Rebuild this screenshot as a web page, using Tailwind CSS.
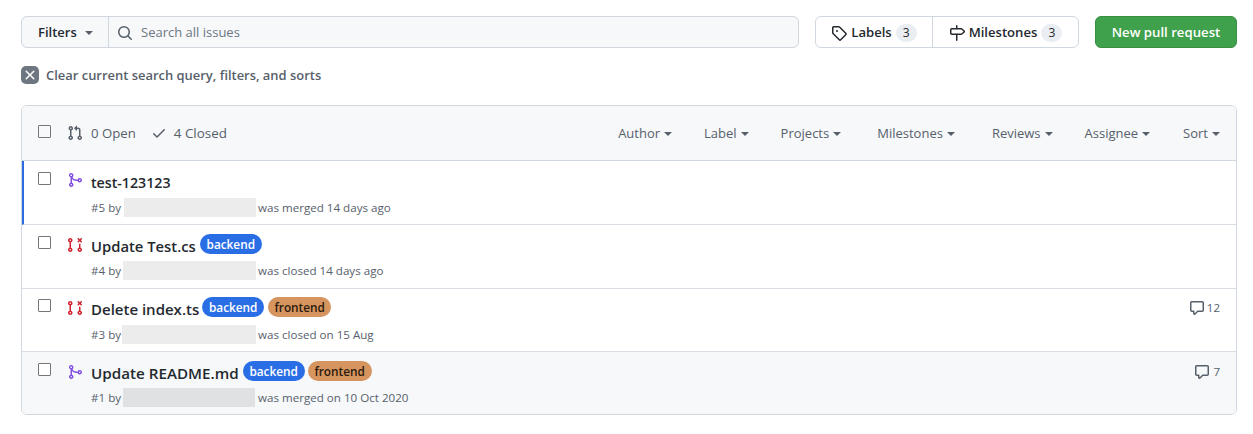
<!DOCTYPE html>
<html lang="en">

<head>
    <meta charset="UTF-8">
    <title>Pull requests</title>
    <script src="https://cdn.jsdelivr.net/npm/@tailwindcss/browser@4"></script>
</head>

<body class="bg-white font-['Open_Sans',sans-serif] text-[#24292f]">
    <div class="px-[21px] pt-4 w-[1237px] box-content pr-[16px]">

        <!-- Top bar -->
        <div class="flex h-8 w-[1216px]">
            <div class="flex w-[778px] rounded-md border border-[#d0d7de] bg-[#f6f8fa]">
                <div class="flex items-center w-[87px] pl-4 pt-px border-r border-[#d0d7de] text-[13px] font-semibold">
                    Filters
                    <span class="ml-2 border-x-4 border-t-4 border-x-transparent border-t-[#57606a]"></span>
                </div>
                <div class="flex items-center pl-2 pt-px text-[13px] text-[#6e7781]">
                    <svg class="w-4 h-4 mr-2 fill-[#57606a]" viewBox="0 0 16 16"><path d="M10.68 11.74a6 6 0 0 1-7.922-8.982 6 6 0 0 1 8.982 7.922l3.04 3.04a.749.749 0 0 1-.326 1.275.749.749 0 0 1-.734-.215ZM11.5 7a4.499 4.499 0 1 0-8.997 0A4.499 4.499 0 0 0 11.5 7Z"/></svg>
                    Search all issues
                </div>
            </div>

            <div class="flex w-[264px] ml-4 rounded-md border border-[#d0d7de] text-[13.1px] font-semibold">
                <div class="flex items-center justify-center w-[117px] pt-px border-r border-[#d0d7de]">
                    <svg class="w-4 h-4 mr-1 fill-[#24292f]" viewBox="0 0 16 16"><path d="M1 7.775V2.75C1 1.784 1.784 1 2.75 1h5.025c.464 0 .91.184 1.238.513l6.25 6.25a1.75 1.75 0 0 1 0 2.474l-5.026 5.026a1.75 1.75 0 0 1-2.474 0l-6.25-6.25A1.752 1.752 0 0 1 1 7.775Zm1.5 0c0 .066.026.13.073.177l6.25 6.25a.25.25 0 0 0 .354 0l5.025-5.025a.25.25 0 0 0 0-.354l-6.25-6.25a.25.25 0 0 0-.177-.073H2.75a.25.25 0 0 0-.25.25ZM6 5a1 1 0 1 1 0 2 1 1 0 0 1 0-2Z"/></svg>
                    Labels
                    <span class="ml-1 w-[21px] h-[18px] rounded-full bg-[#eaeef2] text-xs font-normal text-center leading-[18px]">3</span>
                </div>
                <div class="flex items-center justify-center flex-1 pt-px">
                    <svg class="w-4 h-4 mr-1 fill-[#24292f]" viewBox="0 0 16 16"><path d="M7.75 0a.75.75 0 0 1 .75.75V3h3.634c.414 0 .814.147 1.13.414l2.07 1.75a1.75 1.75 0 0 1 0 2.672l-2.07 1.75a1.75 1.75 0 0 1-1.13.414H8.5v5.25a.75.75 0 0 1-1.5 0V10H2.75A1.75 1.75 0 0 1 1 8.25v-3.5C1 3.784 1.784 3 2.75 3H7V.75A.75.75 0 0 1 7.75 0Zm4.384 8.5a.25.25 0 0 0 .161-.06l2.07-1.75a.248.248 0 0 0 0-.38l-2.07-1.75a.25.25 0 0 0-.161-.06H2.75a.25.25 0 0 0-.25.25v3.5c0 .138.112.25.25.25h9.384Z"/></svg>
                    Milestones
                    <span class="ml-1 w-[21px] h-[18px] rounded-full bg-[#eaeef2] text-xs font-normal text-center leading-[18px]">3</span>
                </div>
            </div>

            <div class="flex items-center justify-center w-[142px] pt-px ml-4 rounded-md bg-[#3fa14b] border border-[#388f43] text-white text-[13.2px] font-semibold">
                New pull request
            </div>
        </div>

        <!-- Clear query -->
        <div class="flex items-center h-[18px] mt-[18px] text-[12.95px] font-semibold text-[#57606a]">
            <span class="flex items-center justify-center w-[18px] h-[18px] mr-[7px] rounded-[5px] bg-[#6e7781]">
                <svg class="w-4 h-4 fill-white" viewBox="0 0 16 16"><path d="M3.72 3.72a.75.75 0 0 1 1.06 0L8 6.94l3.22-3.22a.749.749 0 0 1 1.275.326.749.749 0 0 1-.215.734L9.06 8l3.22 3.22a.749.749 0 0 1-.326 1.275.749.749 0 0 1-.734-.215L8 9.06l-3.22 3.22a.751.751 0 0 1-1.042-.018.751.751 0 0 1-.018-1.042L6.94 8 3.72 4.78a.75.75 0 0 1 0-1.06Z"/></svg>
            </span>
            <span class="pt-px">Clear current search query, filters, and sorts</span>
        </div>

        <!-- Issue list -->
        <div class="w-[1216px] mt-[21px] rounded-md border border-[#d0d7de] overflow-hidden">
            <div class="flex items-center h-[55px] bg-[#f6f8fa] border-b border-[#d0d7de] text-[13px] text-[#57606a]">
                <span class="w-[13px] h-[13px] ml-4 border border-[#767676] rounded-[1px] -mt-1"></span>
                <svg class="w-4 h-4 ml-4 fill-[#57606a]" viewBox="0 0 16 16"><path d="M1.5 3.25a2.25 2.25 0 1 1 3 2.122v5.256a2.251 2.251 0 1 1-1.5 0V5.372A2.25 2.25 0 0 1 1.5 3.25Zm5.677-.177L9.573.677A.25.25 0 0 1 10 .854V2.5h1A2.5 2.5 0 0 1 13.5 5v5.628a2.251 2.251 0 1 1-1.5 0V5a1 1 0 0 0-1-1h-1v1.646a.25.25 0 0 1-.427.177L7.177 3.427a.25.25 0 0 1 0-.354ZM3.75 2.5a.75.75 0 1 0 0 1.5.75.75 0 0 0 0-1.5Zm0 9.5a.75.75 0 1 0 0 1.5.75.75 0 0 0 0-1.5Zm8.25.75a.75.75 0 1 0 1.5 0 .75.75 0 0 0-1.5 0Z"/></svg>
                <span class="ml-2 pt-px text-[13.2px]">0 Open</span>
                <svg class="w-4 h-4 ml-[15px] fill-[#57606a]" viewBox="0 0 16 16"><path d="M13.78 4.22a.75.75 0 0 1 0 1.06l-7.25 7.25a.75.75 0 0 1-1.06 0L2.22 9.28a.751.751 0 0 1 .018-1.042.751.751 0 0 1 1.042-.018L6 10.94l6.72-6.72a.75.75 0 0 1 1.06 0Z"/></svg>
                <span class="ml-[7px] text-[13.4px]">4 Closed</span>
                <div class="flex ml-auto mr-4 pt-px">
                    <span class="flex items-center">Author<span class="ml-1 border-x-4 border-t-4 border-x-transparent border-t-[#57606a]"></span></span>
                    <span class="flex items-center ml-8">Label<span class="ml-1 border-x-4 border-t-4 border-x-transparent border-t-[#57606a]"></span></span>
                    <span class="flex items-center ml-8">Projects<span class="ml-1 border-x-4 border-t-4 border-x-transparent border-t-[#57606a]"></span></span>
                    <span class="flex items-center ml-9">Milestones<span class="ml-1 border-x-4 border-t-4 border-x-transparent border-t-[#57606a]"></span></span>
                    <span class="flex items-center ml-[37px]">Reviews<span class="ml-1 border-x-4 border-t-4 border-x-transparent border-t-[#57606a]"></span></span>
                    <span class="flex items-center ml-8">Assignee<span class="ml-1 border-x-4 border-t-4 border-x-transparent border-t-[#57606a]"></span></span>
                    <span class="flex items-center ml-[33px]">Sort<span class="ml-1 border-x-4 border-t-4 border-x-transparent border-t-[#57606a]"></span></span>
                </div>
            </div>

            <!-- #5 -->
            <div class="flex h-16 border-b border-[#d8dee4] border-l-2 border-l-[#2d6cdf]">
                <span class="w-[13px] h-[13px] ml-[14px] mt-[11px] border border-[#767676] rounded-[1px]"></span>
                <svg class="w-4 h-4 ml-4 mt-[11px] fill-[#8250df]" viewBox="0 0 16 16"><path d="M5.45 5.154A4.25 4.25 0 0 0 9.25 7.5h1.378a2.251 2.251 0 1 1 0 1.5H9.25A5.734 5.734 0 0 1 5 7.123v3.505a2.25 2.25 0 1 1-1.5 0V5.372a2.25 2.25 0 1 1 1.95-.218ZM4.25 13.5a.75.75 0 1 0 0-1.5.75.75 0 0 0 0 1.5Zm8.5-4.5a.75.75 0 1 0 0-1.5.75.75 0 0 0 0 1.5ZM5 3.25a.75.75 0 1 0 0 .005V3.25Z"/></svg>
                <div class="ml-2 pt-[10px]">
                    <div class="flex items-center h-6 text-[14.2px] font-semibold">test-123123</div>
                    <div class="flex items-center h-[19px] mt-[3px] text-[11.6px] text-[#57606a]"><span class="w-[33px]">#5 by</span><span class="w-[132px] h-[19px] mr-[2px] bg-[#ececec]"></span>was merged 14 days ago</div>
                </div>
            </div>

            <!-- #4 -->
            <div class="flex h-16 border-b border-[#d8dee4]">
                <span class="w-[13px] h-[13px] ml-4 mt-[11px] border border-[#767676] rounded-[1px]"></span>
                <svg class="w-4 h-4 ml-4 mt-3 fill-[#cf222e]" viewBox="0 0 16 16"><path d="M3.25 1A2.25 2.25 0 0 1 4 5.372v5.256a2.251 2.251 0 1 1-1.5 0V5.372A2.251 2.251 0 0 1 3.25 1Zm9.5 5.5a.75.75 0 0 1 .75.75v3.378a2.251 2.251 0 1 1-1.5 0V7.25a.75.75 0 0 1 .75-.75Zm-2.03-5.273a.75.75 0 0 1 1.06 0l.97.97.97-.97a.748.748 0 0 1 1.265.332.75.75 0 0 1-.205.729l-.97.97.97.97a.751.751 0 0 1-.018 1.042.751.751 0 0 1-1.042.018l-.97-.97-.97.97a.749.749 0 0 1-1.275-.326.749.749 0 0 1 .215-.734l.97-.97-.97-.97a.75.75 0 0 1 0-1.06ZM2.5 3.25a.75.75 0 1 0 1.5 0 .75.75 0 0 0-1.5 0ZM3.25 12a.75.75 0 1 0 0 1.5.75.75 0 0 0 0-1.5Zm9.5 0a.75.75 0 1 0 0 1.5.75.75 0 0 0 0-1.5Z"/></svg>
                <div class="ml-2 pt-[9px]">
                    <div class="flex items-center h-6 text-[14.8px] font-semibold">Update Test.cs
                        <span class="ml-1 -mt-1 w-[62px] text-center h-5 rounded-full bg-[#2a6ee6] text-white text-[11.8px] font-semibold leading-[21px]">backend</span>
                    </div>
                    <div class="flex items-center h-[19px] mt-[3px] text-[11.6px] text-[#57606a]"><span class="w-8">#4 by</span><span class="w-[133px] h-[19px] mr-[2px] bg-[#ececec]"></span>was closed 14 days ago</div>
                </div>
            </div>

            <!-- #3 -->
            <div class="flex h-[63px] border-b border-[#d8dee4]">
                <span class="w-[13px] h-[13px] ml-4 mt-[10px] border border-[#767676] rounded-[1px]"></span>
                <svg class="w-4 h-4 ml-4 mt-[11px] fill-[#cf222e]" viewBox="0 0 16 16"><path d="M3.25 1A2.25 2.25 0 0 1 4 5.372v5.256a2.251 2.251 0 1 1-1.5 0V5.372A2.251 2.251 0 0 1 3.25 1Zm9.5 5.5a.75.75 0 0 1 .75.75v3.378a2.251 2.251 0 1 1-1.5 0V7.25a.75.75 0 0 1 .75-.75Zm-2.03-5.273a.75.75 0 0 1 1.06 0l.97.97.97-.97a.748.748 0 0 1 1.265.332.75.75 0 0 1-.205.729l-.97.97.97.97a.751.751 0 0 1-.018 1.042.751.751 0 0 1-1.042.018l-.97-.97-.97.97a.749.749 0 0 1-1.275-.326.749.749 0 0 1 .215-.734l.97-.97-.97-.97a.75.75 0 0 1 0-1.06ZM2.5 3.25a.75.75 0 1 0 1.5 0 .75.75 0 0 0-1.5 0ZM3.25 12a.75.75 0 1 0 0 1.5.75.75 0 0 0 0-1.5Zm9.5 0a.75.75 0 1 0 0 1.5.75.75 0 0 0 0-1.5Z"/></svg>
                <div class="ml-2 pt-2">
                    <div class="flex items-center h-6 text-[15px] font-semibold">Delete index.ts
                        <span class="ml-[3px] -mt-1 w-[62px] text-center h-5 rounded-full bg-[#2a6ee6] text-white text-[11.8px] font-semibold leading-[21px]">backend</span>
                        <span class="ml-1 -mt-1 w-[63px] text-center h-5 rounded-full bg-[#d6945f] text-[#2a1a0c] text-[11.8px] font-semibold leading-[21px]">frontend</span>
                    </div>
                    <div class="flex items-center h-[19px] mt-1 text-[11.6px] text-[#57606a]"><span class="w-[31px]">#3 by</span><span class="w-[134px] h-[19px] mr-[2px] bg-[#ececec]"></span>was closed on 15 Aug</div>
                </div>
                <div class="flex items-start ml-auto mr-4 mt-[11px] text-xs text-[#57606a]">
                    <svg class="w-4 h-4 mr-[2px] fill-[#57606a]" viewBox="0 0 16 16"><path d="M1 2.75C1 1.784 1.784 1 2.75 1h10.5c.966 0 1.75.784 1.75 1.75v7.5A1.75 1.75 0 0 1 13.25 12H9.06l-2.573 2.573A1.458 1.458 0 0 1 4 13.543V12H2.75A1.75 1.75 0 0 1 1 10.25Zm1.75-.25a.25.25 0 0 0-.25.25v7.5c0 .138.112.25.25.25h2a.75.75 0 0 1 .75.75v2.19l2.72-2.72a.749.749 0 0 1 .53-.22h4.5a.25.25 0 0 0 .25-.25v-7.5a.25.25 0 0 0-.25-.25Z"/></svg>
                    <span class="text-[11.5px]">12</span>
                </div>
            </div>

            <!-- #1 -->
            <div class="flex h-[62px] bg-[#f6f8fa]">
                <span class="w-[13px] h-[13px] ml-4 mt-[11px] border border-[#767676] rounded-[1px] bg-white"></span>
                <svg class="w-4 h-4 ml-4 mt-3 fill-[#8250df]" viewBox="0 0 16 16"><path d="M5.45 5.154A4.25 4.25 0 0 0 9.25 7.5h1.378a2.251 2.251 0 1 1 0 1.5H9.25A5.734 5.734 0 0 1 5 7.123v3.505a2.25 2.25 0 1 1-1.5 0V5.372a2.25 2.25 0 1 1 1.95-.218ZM4.25 13.5a.75.75 0 1 0 0-1.5.75.75 0 0 0 0 1.5Zm8.5-4.5a.75.75 0 1 0 0-1.5.75.75 0 0 0 0 1.5ZM5 3.25a.75.75 0 1 0 0 .005V3.25Z"/></svg>
                <div class="ml-2 pt-[9px]">
                    <div class="flex items-center h-6 text-[15.2px] font-semibold">Update README.md
                        <span class="ml-1 -mt-1 w-[62px] text-center h-5 rounded-full bg-[#2a6ee6] text-white text-[11.8px] font-semibold leading-[21px]">backend</span>
                        <span class="ml-[3px] -mt-1 w-[64px] text-center h-5 rounded-full bg-[#d6945f] text-[#2a1a0c] text-[11.8px] font-semibold leading-[21px]">frontend</span>
                    </div>
                    <div class="flex items-center h-[19px] mt-[3px] text-[11.6px] text-[#57606a]"><span class="w-8">#1 by</span><span class="w-[132px] h-[19px] mr-[3px] bg-[#dfe1e3]"></span>was merged on 10 Oct 2020</div>
                </div>
                <div class="flex items-start ml-auto mr-4 mt-3 text-xs text-[#57606a]">
                    <svg class="w-4 h-4 mr-[3px] fill-[#57606a]" viewBox="0 0 16 16"><path d="M1 2.75C1 1.784 1.784 1 2.75 1h10.5c.966 0 1.75.784 1.75 1.75v7.5A1.75 1.75 0 0 1 13.25 12H9.06l-2.573 2.573A1.458 1.458 0 0 1 4 13.543V12H2.75A1.75 1.75 0 0 1 1 10.25Zm1.75-.25a.25.25 0 0 0-.25.25v7.5c0 .138.112.25.25.25h2a.75.75 0 0 1 .75.75v2.19l2.72-2.72a.749.749 0 0 1 .53-.22h4.5a.25.25 0 0 0 .25-.25v-7.5a.25.25 0 0 0-.25-.25Z"/></svg>
                    <span class="text-[11.5px]">7</span>
                </div>
            </div>
        </div>
    </div>
</body>

</html>
